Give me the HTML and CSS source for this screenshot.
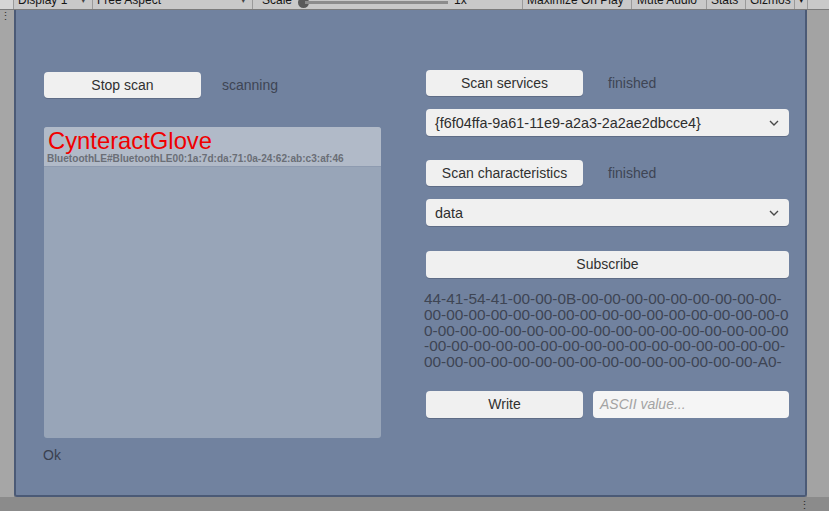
FILE: index.html
```html
<!DOCTYPE html>
<html>
<head>
<meta charset="utf-8">
<link rel="stylesheet" href="styles.css">
</head>
<body>
<div class="toolbar">
  <div class="tb-inner">
    <div class="tb-item tb-corner"></div>
    <div class="tb-item tb-display">Display 1<span class="tb-arrow">▾</span></div>
    <div class="tb-item tb-aspect">Free Aspect<span class="tb-arrow">▾</span></div>
    <div class="tb-item tb-scale">Scale<span class="knob"></span><span class="track"></span><span class="tb-x">1x</span></div>
    <div class="tb-item tb-max">Maximize On Play</div>
    <div class="tb-item tb-mute">Mute Audio</div>
    <div class="tb-item tb-stats">Stats</div>
    <div class="tb-item tb-gizmos">Gizmos</div>
    <div class="tb-item tb-garrow">▾</div>
  </div>
</div>
<div class="main">
  <div class="side-left"><span class="dots">⋮</span></div>
  <div class="panel">
    <div class="col-left">
      <div class="row">
        <div class="btn btn-sm">Stop scan</div>
        <div class="status">scanning</div>
      </div>
      <div class="list">
        <div class="item">
          <div class="item-name">CynteractGlove</div>
          <div class="item-id">BluetoothLE#BluetoothLE00:1a:7d:da:71:0a-24:62:ab:c3:af:46</div>
        </div>
      </div>
      <div class="ok">Ok</div>
    </div>
    <div class="col-right">
      <div class="row">
        <div class="btn btn-sm">Scan services</div>
        <div class="status">finished</div>
      </div>
      <div class="dropdown dd-1">
        <span>{f6f04ffa-9a61-11e9-a2a3-2a2ae2dbcce4}</span>
        <svg class="chev" width="10" height="6" viewBox="0 0 10 6"><path d="M1 1 L5 5 L9 1" fill="none" stroke="#4a4a4a" stroke-width="1.4"/></svg>
      </div>
      <div class="row row-2">
        <div class="btn btn-sm">Scan characteristics</div>
        <div class="status">finished</div>
      </div>
      <div class="dropdown dd-2">
        <span>data</span>
        <svg class="chev" width="10" height="6" viewBox="0 0 10 6"><path d="M1 1 L5 5 L9 1" fill="none" stroke="#4a4a4a" stroke-width="1.4"/></svg>
      </div>
      <div class="btn btn-wide">Subscribe</div>
      <div class="data">
        <div>44-41-54-41-00-00-0B-00-00-00-00-00-00-00-00-00-</div>
        <div>00-00-00-00-00-00-00-00-00-00-00-00-00-00-00-00-0</div>
        <div>0-00-00-00-00-00-00-00-00-00-00-00-00-00-00-00-00</div>
        <div>-00-00-00-00-00-00-00-00-00-00-00-00-00-00-00-00-</div>
        <div>00-00-00-00-00-00-00-00-00-00-00-00-00-00-00-A0-</div>
      </div>
      <div class="row row-write">
        <div class="btn btn-sm">Write</div>
        <div class="input">ASCII value...</div>
      </div>
    </div>
  </div>
  <div class="side-right"></div>
</div>
<div class="bottom"><span class="dots">⋮</span></div>
</body>
</html>
```

FILE: styles.css
```css
* { box-sizing: border-box; }
html, body { margin: 0; padding: 0; }
body {
  width: 829px;
  height: 511px;
  overflow: hidden;
  background: #8b8b8b;
  font-family: "Liberation Sans", Arial, sans-serif;
  color: #333;
}
.toolbar {
  height: 10px;
  overflow: hidden;
  background: #c9c9c9;
  border-bottom: 1px solid #7c7c7c;
}
.tb-inner {
  display: flex;
  height: 18px;
  margin-top: -9px;
  font-size: 12px;
  line-height: 18px;
  color: #161616;
}
.tb-item {
  position: relative;
  border-right: 1px solid #9a9a9a;
  padding-left: 4px;
  white-space: nowrap;
}
.tb-corner { width: 14px; padding: 0; background: #d6d6d6; }
.tb-display { width: 79px; }
.tb-aspect { width: 160px; }
.tb-arrow { position: absolute; right: 6px; top: 0; font-size: 9px; color: #444; }
.tb-scale { width: 270px; padding-left: 9px; border-right: 1px solid #9a9a9a; }
.knob {
  position: absolute; left: 45px; top: 6px;
  width: 11px; height: 11px; border-radius: 50%; background: #5a5a5a;
}
.track {
  position: absolute; left: 52px; top: 10px;
  width: 143px; height: 3px; background: #8c8c8c;
}
.tb-x { position: absolute; left: 201px; top: 0; }
.tb-max { width: 109px; padding-left: 4px; }
.tb-mute { width: 75px; padding-left: 5px; }
.tb-stats { width: 39px; padding-left: 4px; }
.tb-gizmos { width: 49px; padding-left: 4px; }
.tb-garrow { width: 13px; padding-left: 4px; font-size: 9px; border-right: 1px solid #9a9a9a; }

.main {
  display: flex;
  height: 487px;
}
.side-left {
  width: 14px;
  background: #a6a6a6;
  position: relative;
}
.dots {
  position: absolute;
  font-size: 11px;
  line-height: 10px;
  color: #333;
}
.side-left .dots { left: 0px; top: 1px; }
.side-right {
  width: 22px;
  background: #a3a3a3;
}
.panel {
  flex: 1;
  background: #71829f;
  border: 2px solid #4b5a76;
  border-top: none;
  border-radius: 0 0 3px 3px;
  display: grid;
  grid-template-columns: 337px 363px;
  column-gap: 45px;
  padding: 60px 0 0 28px;
  align-items: start;
}
.row {
  display: flex;
  align-items: center;
  height: 26px;
}
.col-left .row { margin-top: 2px; }
.btn {
  background: #f0f0f0;
  border-radius: 4px;
  font-size: 14px;
  color: #303030;
  text-align: center;
  line-height: 26px;
  height: 26px;
  box-shadow: 0 1px 0 rgba(60,70,90,0.35);
}
.btn-sm { width: 157px; }
.btn-wide { width: 363px; height: 27px; line-height: 27px; margin-top: 25px; }
.status {
  margin-left: 21px;
  font-size: 14px;
  color: #3e4554;
}
.col-right .status { margin-left: 25px; }
.list {
  margin-top: 29px;
  height: 311px;
  background: #98a5b8;
  border-radius: 3px;
  overflow: hidden;
}
.item {
  height: 40px;
  background: #b1bac8;
  border-bottom: 1px solid #8e9bb0;
  padding: 1px 0 0 3px;
}
.item-name {
  color: #f00000;
  font-size: 23.8px;
  line-height: 25px;
  margin-left: 1px;
}
.item-id {
  font-size: 10.1px;
  font-weight: bold;
  color: #6a6e76;
  line-height: 12px;
  margin-top: 0px;
  white-space: nowrap;
}
.ok {
  margin-top: 9px;
  margin-left: -1px;
  font-size: 14px;
  color: #39404f;
}
.dropdown {
  height: 27px;
  background: #f0f0f0;
  border-radius: 4px;
  display: flex;
  align-items: center;
  justify-content: space-between;
  padding: 0 10px 0 9px;
  font-size: 14.4px;
  color: #2e2e2e;
  box-shadow: 0 1px 0 rgba(60,70,90,0.35);
}
.dd-1 { margin-top: 13px; }
.dd-2 { margin-top: 13px; }
.row-2 { margin-top: 24px; }
.data {
  margin-top: 13px;
  margin-left: -2px;
  font-size: 15.4px;
  line-height: 15.75px;
  color: #3e4554;
  white-space: nowrap;
}
.row-write { margin-top: 21px; height: 27px; }
.row-write .btn { height: 27px; line-height: 27px; }
.input {
  margin-left: 10px;
  width: 196px;
  height: 27px;
  background: #f5f5f5;
  border-radius: 4px;
  font-size: 14px;
  font-style: italic;
  color: #a3a3a3;
  line-height: 27px;
  padding-left: 7px;
}
.bottom {
  height: 14px;
  background: #8b8b8b;
  position: relative;
}
.bottom .dots { left: 799px; top: 3px; color: #2a2a2a; }
```
